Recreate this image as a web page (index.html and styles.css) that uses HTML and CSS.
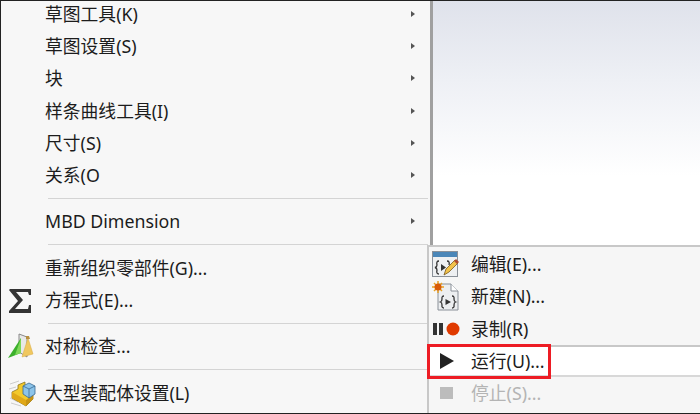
FILE: index.html
```html
<!DOCTYPE html>
<html>
<head>
    <title>Menu</title>
    <link rel="stylesheet" href="styles.css">
</head>
<body>
  <div class="stage">
    <div class="menu">
      <div class="row"><span class="label">草图工具(K)</span><span class="arrow"></span></div>
      <div class="row"><span class="label">草图设置(S)</span><span class="arrow"></span></div>
      <div class="row"><span class="label">块</span><span class="arrow"></span></div>
      <div class="row"><span class="label">样条曲线工具(I)</span><span class="arrow"></span></div>
      <div class="row"><span class="label">尺寸(S)</span><span class="arrow"></span></div>
      <div class="row"><span class="label">关系(O</span><span class="arrow"></span></div>
      <div class="sep"></div>
      <div class="row"><span class="label">MBD Dimension</span><span class="arrow"></span></div>
      <div class="sep"></div>
      <div class="row"><span class="label">重新组织零部件(G)...</span></div>
      <div class="row">
        <svg class="icon sigma" width="26" height="28" viewBox="0 0 26 28">
          <path d="M3 3H24V9H22L21 6H9L16 14L8 23H21L22 19H24V27H2V25L11 15L2 4Z" fill="#333"/>
        </svg>
        <span class="label">方程式(E)...</span>
      </div>
      <div class="sep"></div>
      <div class="row">
        <svg class="icon symmetry" width="28" height="28" viewBox="0 0 28 28">
          <path d="M12 2L20 5V25L12 20Z" fill="#e8e8e8" stroke="#888"/>
          <path d="M21 6L26 22L15 25Z" fill="#f0c860" stroke="#d8a840" stroke-width=".5"/>
          <path d="M19 4H22L23 7L19 7Z" fill="#b89040"/>
          <path d="M14 6V21L1 26Z" fill="#3cb02c"/>
          <path d="M14 6V21L8 23Z" fill="#7ed858"/>
        </svg>
        <span class="label">对称检查...</span>
      </div>
      <div class="sep"></div>
      <div class="row">
        <svg class="icon assembly" width="28" height="30" viewBox="0 0 28 30">
          <path d="M1 6L10 3M0 11L7 9M1 20L9 24M2 25L12 28" stroke="#ccc" fill="none"/>
          <path d="M9 7L16 4V12L24 15V21L17 28L3 20V14L9 11Z" fill="#f2c92c" stroke="#8a7420" stroke-width=".8"/>
          <path d="M3 14L17 22V28L3 20Z" fill="#e0a818"/>
          <path d="M17 22L24 17V21L17 28Z" fill="#c89414"/>
          <path d="M14 8L20 5L26 8V16L20 20L14 16Z" fill="#8cc4ea" stroke="#3a6a92" stroke-width=".8"/>
          <path d="M14 8L20 11L26 8M20 11V20" fill="none" stroke="#3a6a92" stroke-width=".8"/>
        </svg>
        <span class="label">大型装配体设置(L)</span>
      </div>
    </div>

    <div class="canvas"></div>

    <div class="submenu">
      <div class="row">
        <svg class="icon" width="27" height="27" viewBox="0 0 27 27">
          <rect x=".5" y=".5" width="25" height="25" fill="#eef0f2" stroke="#8a9098"/>
          <rect x="1" y="1" width="24" height="5" fill="#4a86b8"/>
          <path d="M7 10Q4 10 5 14Q5 16 3 16.500Q5 17 5 19Q4 23 7 23M15 10Q18 10 17 14" fill="none" stroke="#333" stroke-width="1.300"/>
          <path d="M9 13L14 16.500L9 20Z" fill="#333"/>
          <path d="M12 24L14 18L23 9L26 12L17 21Z" fill="#f2c24a" stroke="#7a5a20" stroke-width=".8"/>
          <path d="M22 10L24 8L27 11L25 13Z" fill="#b04a30"/>
        </svg>
        <span class="label">编辑(E)...</span>
      </div>
      <div class="row">
        <svg class="icon" width="27" height="30" viewBox="0 0 27 30">
          <path d="M6 3H19L26 10V29H6Z" fill="#eceef0" stroke="#8a9098"/>
          <path d="M19 3V10H26" fill="#fff" stroke="#8a9098"/>
          <path d="M12 15Q9.500 15 10 18Q10 20.500 8.500 21Q10 21.500 10 24Q9.500 27 12 27M20 15Q22.500 15 22 18Q22 20.500 23.500 21Q22 21.500 22 24Q22.500 27 20 27" fill="none" stroke="#333" stroke-width="1.300"/>
          <path d="M13.500 18L19 21L13.500 24Z" fill="#333"/>
          <path d="M6 0V12M0 6H12M2 2L10 10M10 2L2 10" stroke="#e8a020" stroke-width="1.500"/>
          <circle cx="6" cy="6" r="3.500" fill="#d85a08"/>
        </svg>
        <span class="label">新建(N)...</span>
      </div>
      <div class="row">
        <svg class="icon" width="28" height="16" viewBox="0 0 28 16">
          <rect x="1" y="2" width="4" height="12" fill="#333"/>
          <rect x="7" y="2" width="4" height="12" fill="#333"/>
          <circle cx="21" cy="8" r="6.500" fill="#e03a00"/>
        </svg>
        <span class="label">录制(R)</span>
      </div>
      <div class="row current">
        <svg class="icon" width="28" height="18" viewBox="0 0 28 18">
          <path d="M8 1L22 9L8 17Z" fill="#222"/>
        </svg>
        <span class="label">运行(U)...</span>
        <div class="callout"></div>
      </div>
      <div class="row disabled">
        <svg class="icon" width="28" height="14" viewBox="0 0 28 14">
          <rect x="8" y="1" width="13" height="12" fill="#bcbcbc"/>
        </svg>
        <span class="label">停止(S)...</span>
      </div>
    </div>
  </div>
</body>
</html>
```

FILE: styles.css
```css
html, body {
    margin: 0;
    padding: 0;
}

body {
    font-family: "Noto Sans", "Noto Sans CJK SC", sans-serif;
    font-size: 17.8px;
    color: #1c1c1c;
    background-color: #fff;
}

.stage {
    position: relative;
    display: flex;
    box-sizing: border-box;
    width: 700px;
    height: 414px;
    overflow: hidden;
    border-top: 1px solid #222;
    border-bottom: 1px solid #222;
    border-left: 1px solid #222;
}

.menu {
    flex: none;
    box-sizing: border-box;
    width: 432px;
    margin-top: -3.5px;
    background-color: #f7f7f7;
    border-right: 3px solid #a0a0a0;
}

.canvas {
    flex: 1;
    background: linear-gradient(#dfe2eb, #eef0f5 80px, #fff 175px);
}

.row {
    position: relative;
    display: flex;
    align-items: center;
    height: 32.3px;
}

.icon {
    position: absolute;
    left: 4px;
}

.sigma {
    left: 6px;
}

.symmetry {
    left: 6px;
}

.assembly {
    left: 8px;
}

.label {
    margin-left: 44px;
    line-height: 20px;
    white-space: nowrap;
}

.arrow {
    position: absolute;
    left: 410px;
    width: 0;
    height: 0;
    border-top: 3px solid transparent;
    border-bottom: 3px solid transparent;
    border-left: 4px solid #555;
}

.sep {
    height: 1px;
    margin: 6.5px 2px 6.5px 47px;
    background-color: #d4d4d4;
}

.submenu {
    position: absolute;
    left: 426px;
    top: 244px;
    right: 0;
    bottom: 0;
    padding-top: 1px;
    background-color: #f6f6f6;
    border-top: 2px solid #c8c8c8;
    border-left: 2px solid #c8c8c8;
}

.submenu .icon {
    left: 3px;
}

.submenu .label {
    margin-left: 42px;
}

.current {
    box-sizing: border-box;
    background-color: #fff;
    border-top: 2px solid #c8c8c8;
    border-bottom: 2px solid #d8d8d8;
}

.disabled {
    color: #b4b4b4;
}

.callout {
    position: absolute;
    left: -2px;
    top: -3px;
    width: 118px;
    height: 29px;
    border: 3px solid #ed1c24;
}
```
